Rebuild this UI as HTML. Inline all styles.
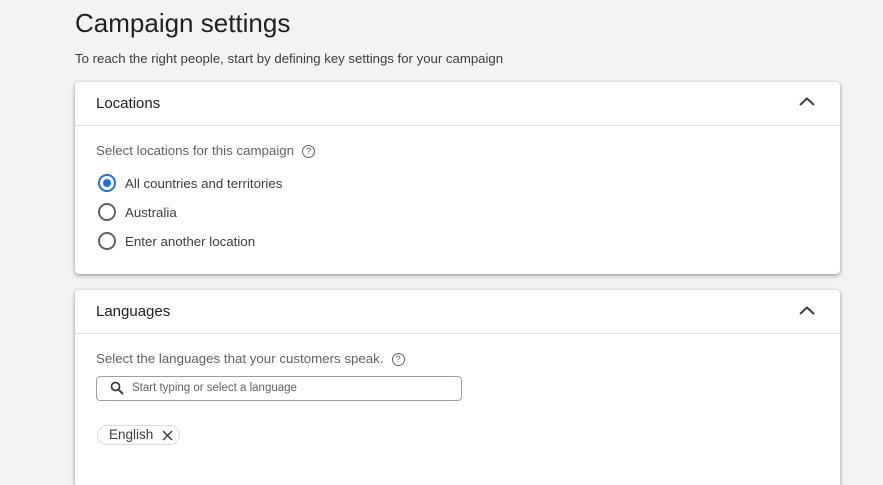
<!DOCTYPE html>
<html style="height:485px;overflow:hidden"><head><style>
body{margin:0;width:883px;height:485px;background:#f1f3f4;font-family:"Liberation Sans",Arial,sans-serif;position:relative;overflow:hidden;color:#202124}
.a{position:absolute;white-space:nowrap}
.card{position:absolute;left:75px;width:765px;background:#fff;border-radius:4px;box-shadow:0 1px 3px rgba(0,0,0,.3),0 2px 6px rgba(0,0,0,.15)}
.hd{position:absolute;left:0;right:0;height:1px;background:#e0e0e0}
.radio{position:absolute;width:14px;height:14px;border:2px solid #5f6368;border-radius:50%}
.lbl{font-size:13.3px;color:#3c4043}
.q{display:inline-block;width:11px;height:11px;border:1.3px solid #5f6368;border-radius:50%;font-size:9px;text-align:center;line-height:11px;color:#5f6368;vertical-align:1px;margin-left:8px}
</style></head><body>
<div class="a" style="left:75px;top:8px;font-size:26px;color:#202124">Campaign settings</div>
<div class="a" style="left:75px;top:51px;font-size:13.2px;color:#3c4043">To reach the right people, start by defining key settings for your campaign</div>

<div class="card" style="top:82px;height:192px">
 <div class="a" style="left:21px;top:13px;font-size:15px">Locations</div>
 <svg class="a" style="left:724px;top:15px" width="16" height="10"><path d="M1 8 L8 1.5 L15 8" fill="none" stroke="#3c4043" stroke-width="2"/></svg>
 <div class="hd" style="top:43px"></div>
 <div class="a lbl" style="left:21px;top:61px;color:#5f6368;font-size:13.3px">Select locations for this campaign<span class="q">?</span></div>
 <div class="radio" style="left:23px;top:92px;border-color:#1a73e8"><div style="position:absolute;left:3px;top:3px;width:8px;height:8px;border-radius:50%;background:#1a73e8"></div></div>
 <div class="a lbl" style="left:50px;top:94px">All countries and territories</div>
 <div class="radio" style="left:23px;top:121px"></div>
 <div class="a lbl" style="left:50px;top:123px">Australia</div>
 <div class="radio" style="left:23px;top:150px"></div>
 <div class="a lbl" style="left:50px;top:152px">Enter another location</div>
</div>

<div class="card" style="top:290px;height:195px;border-radius:4px 4px 0 0">
 <div class="a" style="left:21px;top:13px;font-size:15px">Languages</div>
 <svg class="a" style="left:724px;top:16px" width="16" height="10"><path d="M1 8 L8 1.5 L15 8" fill="none" stroke="#3c4043" stroke-width="2"/></svg>
 <div class="hd" style="top:43px"></div>
 <div class="a lbl" style="left:21px;top:61px;color:#5f6368;font-size:13.3px">Select the languages that your customers speak.<span class="q">?</span></div>
 <div class="a" style="left:21px;top:86px;width:364px;height:23px;border:1px solid #9aa0a6;border-radius:4px">
  <svg class="a" style="left:13px;top:4px" width="14" height="14"><circle cx="5.5" cy="5.5" r="4" fill="none" stroke="#3c4043" stroke-width="1.8"/><path d="M8.5 8.5 L13 13" stroke="#3c4043" stroke-width="2"/></svg>
  <div class="a" style="left:35px;top:5px;font-size:11.5px;color:#5f6368">Start typing or select a language</div>
 </div>
 <div class="a" style="left:22px;top:135px;width:81px;height:18px;border:1px solid #dadce0;border-radius:10px">
  <div class="a" style="left:11px;top:1px;font-size:13.5px;color:#3c4043">English</div>
  <svg class="a" style="left:64px;top:4px" width="11" height="11"><path d="M1 1L10 10M10 1L1 10" stroke="#3c4043" stroke-width="1.5"/></svg>
 </div>
</div>
</body></html>
